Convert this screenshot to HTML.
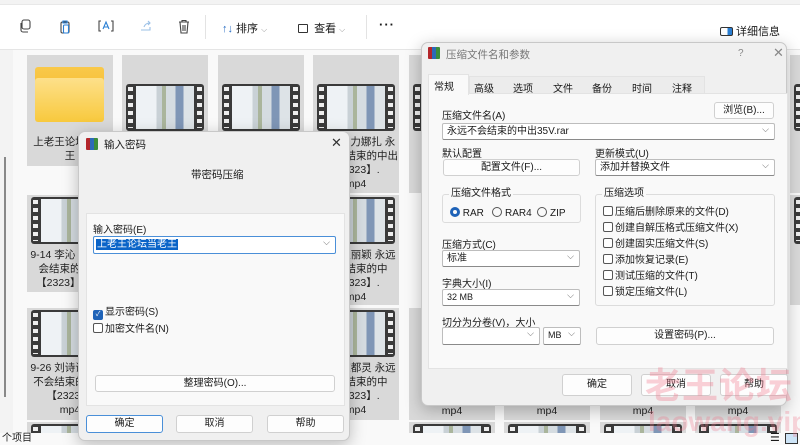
<!DOCTYPE html>
<html style="width:800px;height:445px;overflow:hidden"><head><meta charset="utf-8"><style>
*{box-sizing:border-box;margin:0;padding:0}
body{width:800px;height:445px;overflow:hidden;position:relative;background:#f9f9f9;font-family:"Liberation Sans","Noto Sans CJK SC",sans-serif;font-size:10px;color:#1a1a1a}
.a{position:absolute}
.tb{left:0;top:0;width:800px;height:50px;background:#fff;border-bottom:1px solid #e5e5e5}
.tb0{left:0;top:0;width:800px;height:5px;background:#f3f3f3;border-bottom:1px solid #e8e8e8}
.tile{position:absolute;width:86px;background:#d9d9d9;overflow:hidden}
.th{position:absolute;left:4px;top:29px;width:78px;height:47px;background:#3a3a3a;border-radius:3px}
.th:before,.th:after{content:"";position:absolute;top:3px;width:5px;height:41px;background:repeating-linear-gradient(#eee 0 4px,#3a3a3a 4px 8px)}
.th:before{left:2px}.th:after{right:2px}
.th i{position:absolute;left:10px;right:10px;top:2px;bottom:2px;background:linear-gradient(90deg,#eef2f5 0 35%,#c9d1d6 35% 45%,#aab59c 45% 52%,#d5dce1 52% 68%,#7f96b6 68% 82%,#dde3e7 82%)}
.tt{position:absolute;left:0;right:0;top:80px;text-align:center;font-size:10.5px;line-height:14px;color:#222;overflow:hidden}
.dlg{background:#f0f0f0;border:1px solid #c8c8c8;border-radius:7px;box-shadow:0 4px 16px rgba(0,0,0,.25)}
.btn{position:absolute;background:#fdfdfd;border:1px solid #d0d0d0;border-radius:3px;text-align:center;font-size:10px;line-height:16px}
.cb{position:absolute;background:#fff;border:1px solid #bdbdbd;border-bottom-color:#8a8a8a;border-radius:2px;font-size:10px;line-height:15px;padding-left:4px}
.cb:after{content:"⌵";position:absolute;right:5px;top:-2px;color:#666;font-size:9px}
.lb{position:absolute;font-size:10px;white-space:nowrap}
.ck{display:inline-block;width:10px;height:10px;border:1px solid #555;border-radius:2px;vertical-align:-1px;margin-right:2px;background:#fff}
.grp{position:absolute;border:1px solid #dcdcdc;border-radius:3px}
.grp span{position:absolute;top:-7px;left:6px;background:#f9f9f9;padding:0 2px;font-size:10px;line-height:12px}
.ico{position:absolute;width:12px;height:12px;background:linear-gradient(90deg,#b3262b 0 33%,#2d6ab8 33% 66%,#3b8d3b 66%);border-radius:1px}
</style></head><body>
<div class="a tb"></div><div class="a tb0"></div>
<svg class="a" style="left:18px;top:18px" width="180" height="16" viewBox="0 0 180 16" fill="none" stroke="#444" stroke-width="1.1">
<rect x="4" y="2" width="8" height="9" rx="2"/><path d="M3 5v7a2 2 0 0 0 2 2h5" />
<rect x="43" y="4" width="8" height="11" rx="1.5"/><path d="M45 3h4v2h-4z" stroke="#2a7fd4"/><rect x="45.5" y="7" width="5" height="8" rx="1" stroke="#2a7fd4"/>
<path d="M83 3h-2v10h2M93 3h2v10h-2" /><path d="M85 11l3-7 3 7M86 9h4" stroke="#2a7fd4"/>
<path d="M123 12h9v-3M126 9c1-3 3-4 6-4M130 3l2 2-2 2" stroke="#9bc0e6"/>
<path d="M161 4h10M164 4v-1.5h4V4M162 4l1 11h6l1-11M165 7v6M167 7v6"/>
</svg>
<div class="a" style="left:205px;top:15px;width:1px;height:24px;background:#e3e3e3"></div>
<div class="a" style="left:222px;top:20px;font-size:11px;color:#1a1a1a"><span style="color:#2a6fc4">↑↓</span> 排序 <span style="color:#999;font-size:8px">⌵</span></div>
<div class="a" style="left:298px;top:20px;font-size:11px"><span style="display:inline-block;width:10px;height:9px;border:1px solid #333;border-radius:1px;vertical-align:-1px"></span>&nbsp; 查看 <span style="color:#999;font-size:8px">⌵</span></div>
<div class="a" style="left:366px;top:15px;width:1px;height:24px;background:#e3e3e3"></div>
<div class="a" style="left:379px;top:17px;font-size:13px;font-weight:bold;letter-spacing:1px">···</div>
<div class="a" style="left:720px;top:23px;font-size:11px"><span style="display:inline-block;width:13px;height:9px;border:1px solid #333;border-radius:2px;vertical-align:-1px;background:linear-gradient(90deg,#fff 60%,#2a7fd4 60%)"></span> 详细信息</div>
<div class="a" style="left:0;top:50px;width:13px;height:383px;background:#f3f3f3"></div>
<div class="a" style="left:4px;top:157px;width:2px;height:240px;background:#888"></div>
<div class="tile" style="left:27px;top:55px;height:111px">
 <div class="a" style="left:8px;top:12px;width:69px;height:53px;background:linear-gradient(#f9c94a,#f4b21f);border-radius:3px"></div>
 <div class="a" style="left:8px;top:23px;width:69px;height:44px;background:linear-gradient(#fde08a,#f8c93d);border-radius:3px"></div>
 <div class="tt" style="top:80px">上老王论坛当老<br>王</div></div>
<div class="tile" style="left:122px;top:55px;height:138px"><div class="th"><i></i></div><div class="tt">9-12 迪丽热巴 永远不会结束的中出【2323】.mp4</div></div>
<div class="tile" style="left:218px;top:55px;height:138px"><div class="th"><i></i></div><div class="tt">9-13 杨幂 永远不会结束的中出【2323】.mp4</div></div>
<div class="tile" style="left:313px;top:55px;height:138px"><div class="th"><i></i></div><div class="tt">9-11 古力娜扎 永远不会结束的中出【2323】.<br>mp4</div></div>
<div class="tile" style="left:409px;top:55px;height:138px"><div class="th"><i></i></div></div>
<div class="tile" style="left:790px;top:55px;height:138px"><div class="th"><i></i></div></div>
<div class="tile" style="left:27px;top:195px;height:97px"><div class="th" style="top:2px"><i></i></div><div class="tt" style="top:53px">9-14 李沁 永远不会结束的中出【2323】.mp4</div></div>
<div class="tile" style="left:313px;top:195px;height:110px"><div class="th" style="top:2px"><i></i></div><div class="tt" style="top:53px">9-15 赵丽颖 永远不会结束的中【2323】.<br>mp4</div></div>
<div class="tile" style="left:790px;top:195px;height:110px"><div class="th" style="top:2px"><i></i></div></div>
<div class="tile" style="left:27px;top:308px;height:112px"><div class="th" style="top:2px"><i></i></div><div class="tt" style="top:53px">9-26 刘诗诗 永远不会结束的中出【2323】.<br>mp4</div></div>
<div class="tile" style="left:313px;top:308px;height:112px"><div class="th" style="top:2px"><i></i></div><div class="tt" style="top:53px">9-27 陈都灵 永远不会结束的中【2323】.<br>mp4</div></div>
<div class="tile" style="left:409px;top:308px;height:112px"><div class="tt" style="top:96px">mp4</div></div>
<div class="tile" style="left:504px;top:308px;height:112px"><div class="tt" style="top:96px">mp4</div></div>
<div class="tile" style="left:600px;top:308px;height:112px"><div class="tt" style="top:96px">mp4</div></div>
<div class="tile" style="left:695px;top:308px;height:112px"><div class="tt" style="top:96px">mp4</div></div>
<div class="tile" style="left:27px;top:422px;height:11px"><div class="th" style="top:2px"><i></i></div></div>
<div class="tile" style="left:409px;top:422px;height:11px"><div class="th" style="top:2px"><i></i></div></div>
<div class="tile" style="left:504px;top:422px;height:11px"><div class="th" style="top:2px"><i></i></div></div>
<div class="tile" style="left:600px;top:422px;height:11px"><div class="th" style="top:2px"><i></i></div></div>
<div class="tile" style="left:695px;top:422px;height:11px"><div class="th" style="top:2px"><i></i></div></div>
<div class="a" style="left:0;top:433px;width:800px;height:12px;background:#f9f9f9;overflow:hidden"></div>
<div class="a" style="left:2px;top:432px;font-size:10px;line-height:13px">个项目</div>
<div class="a" style="left:770px;top:432px;font-size:11px;line-height:12px">☰</div>
<div class="a" style="left:785px;top:433px;width:13px;height:11px;border:1px solid #333;background:#cde4f7"></div>

<div class="a dlg" style="left:421px;top:42px;width:366px;height:364px;background:#f0f0f0">
 <div class="ico" style="left:6px;top:4px"></div>
 <div class="lb" style="left:24px;top:4px;font-size:10.5px;color:#777">压缩文件名和参数</div>
 <div class="lb" style="left:316px;top:5px;color:#888">?</div>
 <div class="lb" style="left:351px;top:2px;color:#888;font-size:13px">✕</div>
 <div class="a" style="left:6px;top:50px;width:360px;height:276px;background:#f9f9f9;border:1px solid #e3e3e3"></div>
 <div class="a" style="left:6px;top:31px;width:41px;height:21px;background:#f9f9f9;border:1px solid #e3e3e3;border-bottom:none"></div>
 <div class="a" style="left:47px;top:33px;width:236px;height:17px;background:#ececec;border:1px solid #e3e3e3;border-bottom:none"></div>
 <div class="lb" style="left:12px;top:35px">常规</div>
 <div class="lb" style="left:52px;top:37px">高级</div>
 <div class="lb" style="left:91px;top:37px">选项</div>
 <div class="lb" style="left:131px;top:37px">文件</div>
 <div class="lb" style="left:170px;top:37px">备份</div>
 <div class="lb" style="left:210px;top:37px">时间</div>
 <div class="lb" style="left:250px;top:37px">注释</div>
</div>
<div class="lb" style="left:442px;top:107px">压缩文件名(A)</div>
<div class="btn" style="left:714px;top:102px;width:60px;height:17px">浏览(B)...</div>
<div class="cb" style="left:442px;top:123px;width:333px;height:17px">永远不会结束的中出35V.rar</div>
<div class="lb" style="left:442px;top:145px">默认配置</div>
<div class="btn" style="left:443px;top:159px;width:137px;height:17px">配置文件(F)...</div>
<div class="lb" style="left:595px;top:145px">更新模式(U)</div>
<div class="cb" style="left:595px;top:159px;width:180px;height:17px">添加并替换文件</div>
<div class="grp" style="left:442px;top:194px;width:139px;height:29px"><span>压缩文件格式</span></div>
<div class="lb" style="left:450px;top:207px"><span style="display:inline-block;width:10px;height:10px;border-radius:50%;border:3px solid #1f63b8;vertical-align:-1px"></span> RAR &nbsp; <span style="display:inline-block;width:10px;height:10px;border-radius:50%;border:1px solid #555;vertical-align:-1px"></span> RAR4 &nbsp;<span style="display:inline-block;width:10px;height:10px;border-radius:50%;border:1px solid #555;vertical-align:-1px"></span> ZIP</div>
<div class="lb" style="left:442px;top:236px">压缩方式(C)</div>
<div class="cb" style="left:442px;top:250px;width:138px;height:17px">标准</div>
<div class="lb" style="left:442px;top:275px">字典大小(I)</div>
<div class="cb" style="left:442px;top:289px;width:138px;height:17px;font-size:9px">32 MB</div>
<div class="lb" style="left:442px;top:314px">切分为分卷(V)，大小</div>
<div class="cb" style="left:442px;top:327px;width:98px;height:18px"></div>
<div class="cb" style="left:543px;top:327px;width:38px;height:18px;font-size:9px">MB</div>
<div class="grp" style="left:595px;top:194px;width:180px;height:112px"><span>压缩选项</span></div>
<div class="lb" style="left:603px;top:205px;line-height:16px"><span class="ck"></span>压缩后删除原来的文件(D)<br><span class="ck"></span>创建自解压格式压缩文件(X)<br><span class="ck"></span>创建固实压缩文件(S)<br><span class="ck"></span>添加恢复记录(E)<br><span class="ck"></span>测试压缩的文件(T)<br><span class="ck"></span>锁定压缩文件(L)</div>
<div class="btn" style="left:596px;top:327px;width:178px;height:18px">设置密码(P)...</div>
<div class="btn" style="left:562px;top:374px;width:70px;height:22px;line-height:20px">确定</div>
<div class="btn" style="left:641px;top:374px;width:70px;height:22px;line-height:20px">取消</div>
<div class="btn" style="left:720px;top:374px;width:68px;height:22px;line-height:20px">帮助</div>
<div class="a" style="left:645px;top:366px;font-size:36px;font-weight:bold;color:rgba(240,120,140,.35);letter-spacing:1px;line-height:40px">老王论坛</div>
<div class="a" style="left:648px;top:406px;font-size:28px;font-weight:bold;color:rgba(240,120,140,.3);line-height:32px;height:39px;overflow:hidden">laowang.vip</div>

<div class="a dlg" style="left:78px;top:131px;width:272px;height:310px">
 <div class="ico" style="left:7px;top:6px"></div>
 <div class="lb" style="left:25px;top:5px;font-size:10.5px">输入密码</div>
 <div class="lb" style="left:252px;top:3px;font-size:13px;color:#333">✕</div>
 <div class="lb" style="left:112px;top:35px;font-size:10.5px">带密码压缩</div>
 <div class="a" style="left:7px;top:81px;width:259px;height:193px;background:#f9f9f9;border:1px solid #e3e3e3"></div>
</div>
<div class="lb" style="left:93px;top:221px">输入密码(E)</div>
<div class="cb" style="left:93px;top:236px;width:243px;height:18px;border:1px solid #4a8fd8;padding-left:2px"><span style="background:#0a64c8;color:#fff;padding:0 1px">上老王论坛当老王</span></div>
<div class="lb" style="left:93px;top:304px;line-height:17px"><span class="ck" style="background:#1f63b8;border-color:#1f63b8;color:#fff;font-size:7px;line-height:8px;text-align:center">✓</span>显示密码(S)<br><span class="ck"></span>加密文件名(N)</div>
<div class="btn" style="left:95px;top:375px;width:240px;height:17px">整理密码(O)...</div>
<div class="btn" style="left:86px;top:415px;width:77px;height:18px;border-color:#4a8fd8">确定</div>
<div class="btn" style="left:176px;top:415px;width:77px;height:18px">取消</div>
<div class="btn" style="left:267px;top:415px;width:77px;height:18px">帮助</div>
</body></html>
